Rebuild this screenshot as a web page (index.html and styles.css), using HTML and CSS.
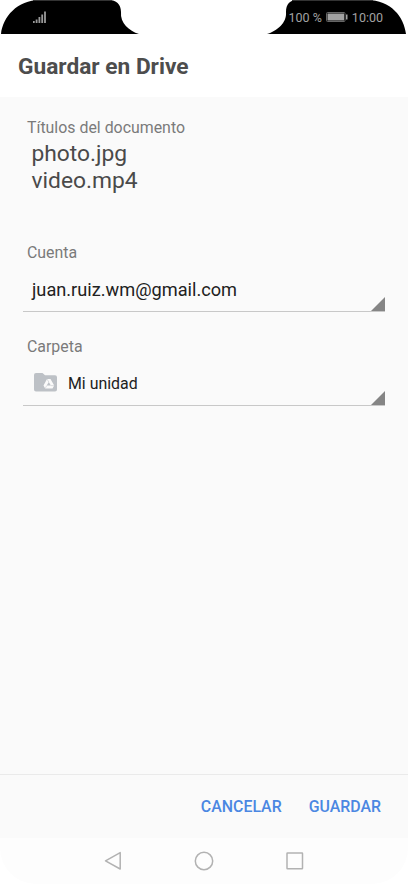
FILE: index.html
```html
<!DOCTYPE html>
<html lang="es">
<head>
<meta charset="utf-8">
<title>Guardar en Drive</title>
<link rel="stylesheet" href="styles.css">
</head>
<body>
<div class="screen">
  <div class="status">
    <svg class="status-shape" width="408" height="34" viewBox="0 0 408 34">
      <path d="M1 34C3 17 17 0 40 0H109C116 0 121 4 121 12C120 23 129 31 139 34Z"/>
      <path d="M267 34C277 31 287 23 286 12C286 4 290 0 297 0H367C391 0 404 17 406 34Z"/>
      <path class="edge" d="M33 .5H112M292 .5H373"/>
    </svg>
    <svg class="signal" width="13" height="12" viewBox="0 0 13 12">
      <path d="M.8 12V10M3.6 12V8.5M6.4 12V6M9.2 12V3.5M12 12V.5"/>
    </svg>
    <div class="status-info">
      <span>100 %</span>
      <svg class="battery" width="22" height="10" viewBox="0 0 22 10">
        <rect class="case" x=".5" y=".5" width="18.5" height="9" rx="1"/>
        <rect class="charge" x="1.5" y="1.5" width="16.5" height="7"/>
        <rect class="charge" x="20" y="2.5" width="1.5" height="5"/>
      </svg>
      <span>10:00</span>
    </div>
  </div>
  <header class="header"><h1>Guardar en Drive</h1></header>
  <main class="content">
    <div class="label">Títulos del documento</div>
    <div class="files"><div>photo.jpg</div><div>video.mp4</div></div>
    <div class="label label-account">Cuenta</div>
    <div class="spinner email">
      <span>juan.ruiz.wm@gmail.com</span>
      <svg class="corner" width="14" height="14" viewBox="0 0 14 14"><path d="M14 0V14H0Z"/></svg>
    </div>
    <div class="label label-folder">Carpeta</div>
    <div class="spinner folder">
      <svg class="folder-icon" width="23" height="19" viewBox="0 0 23 19">
        <path fill="#bdc1c6" d="M2 0H8.5L11 2.3H21Q23 2.3 23 4.3V16.5Q23 18.5 21 18.5H2Q0 18.5 0 16.5V2Q0 0 2 0Z"/>
        <path fill="#fafafa" fill-rule="evenodd" d="M13 6H16.5L20.2 12.6L18.5 15.5H11.2L9.5 12.6ZM14.8 9L12.7 12.6H16.9Z"/>
        <path stroke="#bdc1c6" stroke-width=".5" d="M13 6L14.8 9M20.2 12.6H16.9M11.2 15.5L12.7 12.6"/>
      </svg>
      <span>Mi unidad</span>
      <svg class="corner" width="14" height="14" viewBox="0 0 14 14"><path d="M14 0V14H0Z"/></svg>
    </div>
  </main>
  <footer class="actions"><span class="cancel">CANCELAR</span><span class="save">GUARDAR</span></footer>
  <nav class="nav">
    <svg width="18" height="20" viewBox="0 0 18 20"><path d="M16.2 1.6V18L1.5 9.8Z"/></svg>
    <svg width="20" height="20" viewBox="0 0 20 20"><circle cx="10" cy="10" r="8.7"/></svg>
    <svg width="18" height="18" viewBox="0 0 18 18"><rect x="1" y="1" width="15.5" height="15.7" rx=".5"/></svg>
  </nav>
</div>
</body>
</html>
```
FILE: styles.css
```css
* { box-sizing: border-box; }
body { margin: 0; background: #fff; font-family: Roboto, sans-serif; }
.screen { width: 408px; height: 884px; display: flex; flex-direction: column; overflow: hidden; }
.status { position: relative; height: 34px; flex: none; display: flex; justify-content: space-between; padding: 0 25px 0 33px; }
.status-shape { position: absolute; left: 0; top: 0; }
.edge { stroke: #333; fill: none; }
.signal { position: relative; margin-top: 11px; fill: none; stroke: #999; stroke-width: 1.8; }
.status-info { position: relative; display: flex; align-items: center; height: 34px; color: #a2a2a2; font-size: 12.5px; white-space: nowrap; }
.battery { margin: 0 4px; }
.case { fill: none; stroke: #666; }
.charge { fill: #a2a2a2; }
.header { height: 63px; flex: none; padding: 18px 18px 0; }
.header h1 { margin: 0; font-size: 22.7px; line-height: 30px; font-weight: 700; color: #4d4d4d; white-space: nowrap; }
.content { flex: 1; background: #fafafa; padding: 21px 23px 0; }
.label { height: 20px; padding-left: 4px; font-size: 15.9px; line-height: 20px; color: #7a7a7a; }
.files { height: 54px; padding-left: 8.5px; margin-top: 2px; font-size: 22.8px; line-height: 27px; color: #4a4a4a; }
.label-account { margin-top: 49px; }
.label-folder { margin-top: 25px; }
.spinner { display: flex; align-items: center; position: relative; width: 362px; height: 49px; margin-bottom: 1px; border-bottom: 1px solid #c8c8c8; padding: 5px 0 0 9px; color: #212121; }
.email { font-size: 18.2px; }
.folder { font-size: 15.9px; padding: 5px 0 0 11px; gap: 11px; }
.folder-icon { margin-bottom: 2px; }
.corner { position: absolute; right: 0; bottom: 0; fill: #858585; }
.actions { height: 64px; flex: none; display: flex; justify-content: flex-end; align-items: center; gap: 27px; padding: 0 27px 0 0; border-top: 1px solid #eaeaea; background: #fafafa; color: #4b87e2; font-size: 15.9px; font-weight: 500; }
.nav { height: 46px; flex: none; display: flex; align-items: center; gap: 72px; padding-left: 104px; background: #fdfdfd; border-radius: 0 0 36px 36px; }
.nav svg { fill: none; stroke: #b2b2b2; stroke-width: 1.5; stroke-linejoin: round; }
```
